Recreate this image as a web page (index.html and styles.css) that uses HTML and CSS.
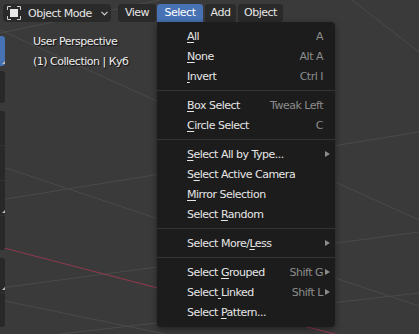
FILE: index.html
```html
<!DOCTYPE html>
<html lang="en">
<head>
    <meta charset="UTF-8">
    <meta name="viewport" content="width=device-width, initial-scale=1.0">
    <title>3D Viewport - Select menu</title>
    <link rel="stylesheet" href="styles.css">
</head>
<body>
    <div class="viewport">
        <svg class="grid" width="419" height="334" viewBox="0 0 419 334">
            <g stroke="#4a4a4a" stroke-width="1" fill="none">
                <line x1="0" y1="30" x2="419" y2="220"/>
                <line x1="0" y1="33" x2="160" y2="0"/>
                <line x1="0" y1="166" x2="419" y2="306"/>
                <line x1="0" y1="200" x2="419" y2="132"/>
                <line x1="0" y1="288" x2="419" y2="232"/>
                <line x1="0" y1="300" x2="165" y2="334"/>
                <line x1="60" y1="334" x2="419" y2="293"/>
                <line x1="352" y1="0" x2="419" y2="52"/>
            </g>
            <line x1="0" y1="247" x2="419" y2="356" stroke="#8c3a4e" stroke-width="1.2"/>
        </svg>

        <header class="header">
            <div class="mode-btn">
                <svg class="mode-icon" width="14" height="14" viewBox="0 0 14 14">
                    <path d="M0.5 4V0.5H4M10 0.5H13.5V4M13.5 10V13.5H10M4 13.5H0.5V10" stroke="#cfcfcf" fill="none"/>
                    <rect x="3" y="3" width="8" height="8" fill="#e8e8e8"/>
                </svg>
                <span class="mode-label">Object Mode</span>
                <svg class="chevron" width="7" height="5" viewBox="0 0 7 5">
                    <path d="M0.5 0.8L3.5 3.8L6.5 0.8" stroke="#cfcfcf" stroke-width="1.2" fill="none"/>
                </svg>
            </div>
            <nav class="menus">
                <span class="menu-btn btn-view">View</span>
                <span class="menu-btn btn-select active">Select</span>
                <span class="menu-btn btn-add">Add</span>
                <span class="menu-btn btn-object">Object</span>
            </nav>
        </header>

        <div class="main">
            <div class="toolbar">
                <div class="tool-group">
                    <div class="tool active has-sub"></div>
                </div>
                <div class="tool-group">
                    <div class="tool"></div>
                </div>
                <div class="tool-group group-wide">
                    <div class="tool"></div>
                    <div class="tool"></div>
                    <div class="tool has-sub"></div>
                    <div class="tool"></div>
                </div>
                <div class="tool-group group-wide">
                    <div class="tool has-sub"></div>
                    <div class="tool"></div>
                </div>
            </div>
            <div class="info">
                <div>User Perspective</div>
                <div>(1) Collection | Куб</div>
            </div>
        </div>

        <div class="dropdown">
            <div class="item"><span class="label"><u>A</u>ll</span><span class="key">A</span><span class="sub"></span></div>
            <div class="item"><span class="label"><u>N</u>one</span><span class="key">Alt A</span><span class="sub"></span></div>
            <div class="item"><span class="label"><u>I</u>nvert</span><span class="key">Ctrl I</span><span class="sub"></span></div>
            <div class="separator"></div>
            <div class="item"><span class="label"><u>B</u>ox Select</span><span class="key">Tweak Left</span><span class="sub"></span></div>
            <div class="item"><span class="label"><u>C</u>ircle Select</span><span class="key">C</span><span class="sub"></span></div>
            <div class="separator"></div>
            <div class="item"><span class="label"><u>S</u>elect All by Type...</span><span class="key"></span><span class="sub"><i class="arrow"></i></span></div>
            <div class="item"><span class="label">S<u>e</u>lect Active Camera</span><span class="key"></span><span class="sub"></span></div>
            <div class="item"><span class="label"><u>M</u>irror Selection</span><span class="key"></span><span class="sub"></span></div>
            <div class="item"><span class="label">Select <u>R</u>andom</span><span class="key"></span><span class="sub"></span></div>
            <div class="separator"></div>
            <div class="item"><span class="label">Select More/<u>L</u>ess</span><span class="key"></span><span class="sub"><i class="arrow"></i></span></div>
            <div class="separator"></div>
            <div class="item"><span class="label">Select <u>G</u>rouped</span><span class="key">Shift G</span><span class="sub"><i class="arrow"></i></span></div>
            <div class="item"><span class="label">Select<u> </u>Linked</span><span class="key">Shift L</span><span class="sub"><i class="arrow"></i></span></div>
            <div class="item"><span class="label">Select <u>P</u>attern...</span><span class="key"></span><span class="sub"></span></div>
        </div>
    </div>
</body>
</html>
```

FILE: styles.css
```css
body {
    margin: 0;
    background-color: #3a3a3a;
    font-family: 'DejaVu Sans', 'Liberation Sans', sans-serif;
    font-size: 11px;
    letter-spacing: -0.5px;
    color: #e6e6e6;
}

.viewport {
    position: relative;
    width: 419px;
    height: 334px;
    overflow: hidden;
    background-color: #3a3a3a;
}

.grid {
    position: absolute;
    left: 0;
    top: 0;
}

.header {
    position: relative;
    display: flex;
    align-items: flex-start;
    height: 22px;
    padding: 4px 0 0 3px;
    box-sizing: border-box;
}

.mode-btn {
    display: flex;
    align-items: center;
    width: 108px;
    height: 18px;
    padding-left: 4px;
    box-sizing: border-box;
    background-color: #2a2a2a;
    border-radius: 4px;
}

.mode-icon {
    flex: none;
    margin-right: 7px;
}

.mode-label {
    flex: 1;
}

.chevron {
    flex: none;
    margin-right: 3px;
}

.menus {
    display: flex;
    margin-left: 7px;
}

.menu-btn {
    height: 18px;
    line-height: 18px;
    text-align: center;
    background-color: #2a2a2a;
    border-radius: 3px;
    margin-right: 2px;
}

.btn-view {
    width: 38px;
    margin-right: 1px;
}

.btn-select {
    width: 46px;
}

.btn-add {
    width: 31px;
}

.btn-object {
    width: 45px;
}

.menu-btn.active {
    background-color: #4772b3;
    color: #ffffff;
    border-radius: 3px 3px 0 0;
}

.main {
    position: relative;
    display: flex;
}

.toolbar {
    display: flex;
    flex-direction: column;
    width: 5px;
    margin-top: 14px;
}

.tool-group {
    background-color: #282828;
    border-radius: 0 3px 3px 0;
    margin-bottom: 5px;
}

.group-wide {
    margin-top: 3px;
}

.tool {
    position: relative;
    height: 32px;
    border-top: 1px solid #323232;
}

.tool:first-child {
    border-top: none;
}

.group-wide .tool {
    height: 34px;
}

.tool.active {
    height: 30px;
    background-color: #4772b3;
    border-radius: 0 3px 3px 0;
}

.tool.has-sub::after {
    content: "";
    position: absolute;
    right: 0;
    bottom: 2px;
    border-left: 3px solid transparent;
    border-bottom: 3px solid #bdbdbd;
}

.info {
    margin-left: 28px;
    padding-top: 10px;
    line-height: 20px;
    color: #eeeeee;
    text-shadow: 1px 1px 1px rgba(0, 0, 0, 0.8);
}

.dropdown {
    position: absolute;
    left: 157px;
    top: 22px;
    width: 178px;
    padding: 4px 0 5px 0;
    box-sizing: border-box;
    background-color: #1c1c1c;
    border-radius: 0 4px 4px 4px;
    box-shadow: 0 2px 6px rgba(0, 0, 0, 0.45);
}

.item {
    display: flex;
    align-items: center;
    height: 20px;
    padding: 0 5px 0 30px;
}

.label {
    flex: 1;
    white-space: pre;
}

.label u {
    text-underline-offset: 2px;
}

.key {
    color: #8c8c8c;
}

.sub {
    display: flex;
    justify-content: flex-end;
    width: 7px;
}

.arrow {
    display: block;
    width: 0;
    height: 0;
    border-left: 5px solid #8c8c8c;
    border-top: 3px solid transparent;
    border-bottom: 3px solid transparent;
}

.separator {
    height: 9px;
    box-sizing: border-box;
    padding-top: 4px;
}

.separator::before {
    content: "";
    display: block;
    height: 1px;
    background-color: #333333;
}
```
